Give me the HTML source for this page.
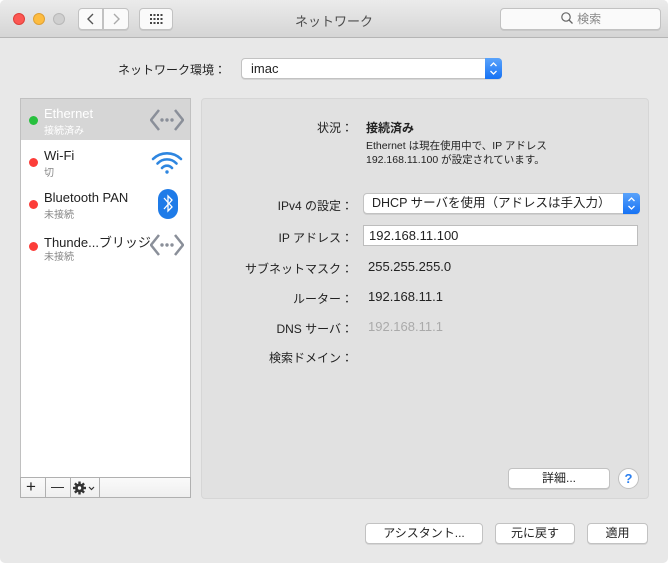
<!DOCTYPE html>
<html><head><meta charset="utf-8"><style>
*{margin:0;padding:0;box-sizing:border-box}
body{width:668px;height:563px;overflow:hidden;background:#fff;font-family:"Liberation Sans","Noto Sans CJK JP",sans-serif;color:#222;font-size:12px}
.win{position:absolute;left:0;top:0;width:668px;height:563px;background:#e8e8e8;border-radius:5px;overflow:hidden}
.tb{position:absolute;left:0;top:0;width:668px;height:38px;background:linear-gradient(#ebebeb,#d5d5d5);border-bottom:1px solid #b5b5b5}
.a{position:absolute;white-space:nowrap}
.dot{position:absolute;width:12px;height:12px;border-radius:50%}
.btn{position:absolute;background:#fff;border:1px solid #c2c2c2;border-radius:4px;box-shadow:0 1px 0 rgba(0,0,0,.08);text-align:center;font-size:12px;color:#222}
.lab{position:absolute;text-align:right;width:160px;font-size:12px}
.sd{position:absolute;width:9px;height:9px;border-radius:50%}
</style></head><body><div class="win">
<div class="tb">
<div class="dot" style="left:13px;top:13px;background:#fc5753;border:1px solid #de3f3a"></div>
<div class="dot" style="left:33px;top:13px;background:#fdbc40;border:1px solid #dea035"></div>
<div class="dot" style="left:53px;top:13px;background:#cfcfcf;border:1px solid #b8b8b8"></div>
<div class="btn" style="left:78px;top:8px;width:25px;height:22px;border-radius:4px 0 0 4px;background:#fafafa"><svg width="23" height="20"><path d="M14 5l-5 5 5 5" stroke="#555" stroke-width="1.4" fill="none"/></svg></div>
<div class="btn" style="left:103px;top:8px;width:26px;height:22px;border-radius:0 4px 4px 0;background:#fafafa"><svg width="24" height="20"><path d="M10 5l5 5-5 5" stroke="#aaa" stroke-width="1.4" fill="none"/></svg></div>
<div class="btn" style="left:139px;top:8px;width:34px;height:22px;background:#fafafa"><svg width="32" height="20"><g fill="#444"><rect x="10" y="5" width="2" height="2"/><rect x="13.5" y="5" width="2" height="2"/><rect x="17" y="5" width="2" height="2"/><rect x="20.5" y="5" width="2" height="2"/><rect x="10" y="9" width="2" height="2"/><rect x="13.5" y="9" width="2" height="2"/><rect x="17" y="9" width="2" height="2"/><rect x="20.5" y="9" width="2" height="2"/><rect x="10" y="13" width="2" height="2"/><rect x="13.5" y="13" width="2" height="2"/><rect x="17" y="13" width="2" height="2"/><rect x="20.5" y="13" width="2" height="2"/></g></svg></div>
<div class="a" style="left:0;width:668px;text-align:center;top:11px;font-size:13px;color:#4d4d4d">ネットワーク</div>
<div class="btn" style="left:500px;top:8px;width:161px;height:22px;background:#fafafa;color:#888;font-size:12px;line-height:20px"><svg width="14" height="14" style="vertical-align:-2px"><circle cx="6" cy="6" r="4.2" stroke="#666" stroke-width="1.2" fill="none"/><path d="M9 9l3.5 3.5" stroke="#666" stroke-width="1.3"/></svg> 検索</div>
</div>

<div class="a" style="left:118px;top:61px;font-size:12px">ネットワーク環境：</div>
<div class="btn" style="left:241px;top:58px;width:261px;height:21px;text-align:left;padding-left:9px;line-height:19px;font-size:13px;border-radius:4px">imac
<div style="position:absolute;right:-1px;top:-1px;width:17px;height:21px;background:linear-gradient(#5aa3fb,#1672f4);border-radius:0 4px 4px 0"><svg width="17" height="21"><path d="M5.5 8l3-3 3 3M5.5 13l3 3 3-3" stroke="#fff" stroke-width="1.3" fill="none"/></svg></div></div>

<div class="a" style="left:20px;top:98px;width:171px;height:400px;background:#fff;border:1px solid #c0c0c0"></div>
<div class="a" style="left:21px;top:99px;width:169px;height:41px;background:#d6d6d6"></div>
<div class="sd" style="left:29px;top:116px;background:#27c03e"></div>
<div class="a" style="left:44px;top:106px;font-size:13px;color:#fff">Ethernet</div>
<div class="a" style="left:44px;top:122px;font-size:10px;color:#fff">接続済み</div>
<svg class="a" style="left:150px;top:107px" width="34" height="26"><path d="M9 3l-8 10 8 10M25 3l8 10-8 10" stroke="#8a8f99" stroke-width="2.5" fill="none"/><circle cx="12" cy="13" r="1.7" fill="#8a8f99"/><circle cx="17" cy="13" r="1.7" fill="#8a8f99"/><circle cx="22" cy="13" r="1.7" fill="#8a8f99"/></svg>

<div class="sd" style="left:29px;top:158px;background:#fc3d39"></div>
<div class="a" style="left:44px;top:148px;font-size:13px">Wi-Fi</div>
<div class="a" style="left:44px;top:164px;font-size:10px;color:#888">切</div>
<svg class="a" style="left:150px;top:150px" width="34" height="26"><g stroke="#2e86e0" stroke-width="2.6" fill="none" stroke-linecap="round"><path d="M3 9a20 20 0 0 1 28 0"/><path d="M7.5 13.5a13 13 0 0 1 19 0"/><path d="M12 18a6.5 6.5 0 0 1 10 0"/></g><circle cx="17" cy="22" r="1.7" fill="#2e86e0"/></svg>

<div class="sd" style="left:29px;top:200px;background:#fc3d39"></div>
<div class="a" style="left:44px;top:190px;font-size:13px">Bluetooth PAN</div>
<div class="a" style="left:44px;top:206px;font-size:10px;color:#888">未接続</div>
<svg class="a" style="left:156px;top:188px" width="24" height="32"><rect x="2" y="1" width="20" height="30" rx="10" fill="#1e7be8"/><path d="M8 10l8 9-4 4V8l4 4-8 9" stroke="#fff" stroke-width="1.3" fill="none"/></svg>

<div class="sd" style="left:29px;top:242px;background:#fc3d39"></div>
<div class="a" style="left:44px;top:232px;font-size:13px">Thunde...ブリッジ</div>
<div class="a" style="left:44px;top:248px;font-size:10px;color:#888">未接続</div>
<svg class="a" style="left:150px;top:232px" width="34" height="26"><path d="M9 3l-8 10 8 10M25 3l8 10-8 10" stroke="#8a8f99" stroke-width="2.5" fill="none"/><circle cx="12" cy="13" r="1.7" fill="#8a8f99"/><circle cx="17" cy="13" r="1.7" fill="#8a8f99"/><circle cx="22" cy="13" r="1.7" fill="#8a8f99"/></svg>

<div class="a" style="left:20px;top:477px;width:171px;height:21px;background:linear-gradient(#fafafa,#efefef);border:1px solid #b0b0b0"></div>
<div class="a" style="left:45px;top:478px;width:1px;height:19px;background:#b0b0b0"></div>
<div class="a" style="left:70px;top:478px;width:1px;height:19px;background:#b0b0b0"></div>
<div class="a" style="left:99px;top:478px;width:1px;height:19px;background:#b0b0b0"></div>
<div class="a" style="left:26px;top:478px;font-size:17px;line-height:18px">+</div>
<div class="a" style="left:51px;top:487px;width:13px;height:1.3px;background:#333"></div>
<svg class="a" style="left:73px;top:481px" width="26" height="14"><g fill="#333"><circle cx="6.5" cy="7" r="4.5"/><rect x="5.3" y="0.5" width="2.4" height="13"/><rect x="0" y="5.8" width="13" height="2.4"/><rect x="5.3" y="0.5" width="2.4" height="13" transform="rotate(45 6.5 7)"/><rect x="5.3" y="0.5" width="2.4" height="13" transform="rotate(-45 6.5 7)"/></g><circle cx="6.5" cy="7" r="1.7" fill="#fff"/><path d="M16 6l2.5 2.5L21 6" stroke="#333" stroke-width="1.2" fill="none"/></svg>

<div class="a" style="left:201px;top:98px;width:448px;height:401px;background:#e1e1e1;border:1px solid #d6d6d6;border-radius:4px"></div>
<div class="lab" style="left:193px;top:119px">状況：</div>
<div class="a" style="left:366px;top:119px;font-weight:bold">接続済み</div>
<div class="a" style="left:366px;top:139px;font-size:10.5px;line-height:14px">Ethernet は現在使用中で、IP アドレス<br>192.168.11.100 が設定されています。</div>

<div class="lab" style="left:193px;top:197px">IPv4 の設定：</div>
<div class="btn" style="left:363px;top:193px;width:277px;height:21px;text-align:left;padding-left:8px;line-height:19px;font-size:12.5px">DHCP サーバを使用（アドレスは手入力）
<div style="position:absolute;right:-1px;top:-1px;width:17px;height:21px;background:linear-gradient(#5aa3fb,#1672f4);border-radius:0 4px 4px 0"><svg width="17" height="21"><path d="M5.5 8l3-3 3 3M5.5 13l3 3 3-3" stroke="#fff" stroke-width="1.3" fill="none"/></svg></div></div>
<div class="lab" style="left:193px;top:229px">IP アドレス：</div>
<div class="a" style="left:363px;top:225px;width:275px;height:21px;background:#fff;border:1px solid #bdbdbd;padding-left:5px;line-height:19px;font-size:13px">192.168.11.100</div>
<div class="lab" style="left:193px;top:260px">サブネットマスク：</div>
<div class="a" style="left:368px;top:259px;font-size:13px">255.255.255.0</div>
<div class="lab" style="left:193px;top:290px">ルーター：</div>
<div class="a" style="left:368px;top:289px;font-size:13px">192.168.11.1</div>
<div class="lab" style="left:193px;top:320px">DNS サーバ：</div>
<div class="a" style="left:368px;top:319px;font-size:13px;color:#aaa">192.168.11.1</div>
<div class="lab" style="left:193px;top:349px">検索ドメイン：</div>

<div class="btn" style="left:508px;top:468px;width:102px;height:21px;line-height:19px">詳細...</div>
<div class="a" style="left:618px;top:468px;width:21px;height:21px;border-radius:50%;background:#fff;border:1px solid #c0c0c0;text-align:center;line-height:19px;color:#2a7ff0;font-weight:bold;font-size:13px">?</div>

<div class="btn" style="left:365px;top:523px;width:118px;height:21px;line-height:19px">アシスタント...</div>
<div class="btn" style="left:495px;top:523px;width:80px;height:21px;line-height:19px">元に戻す</div>
<div class="btn" style="left:587px;top:523px;width:61px;height:21px;line-height:19px">適用</div>
</div></body></html>
